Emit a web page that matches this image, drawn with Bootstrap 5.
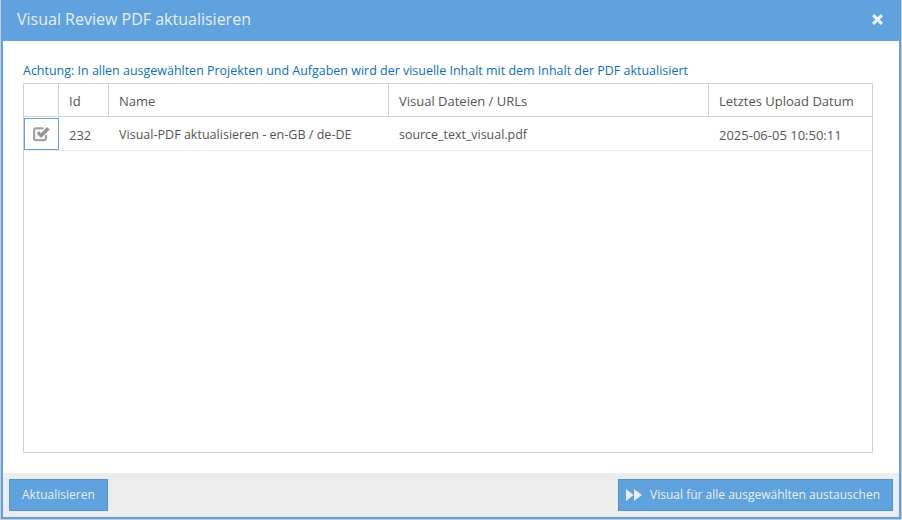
<!DOCTYPE html>
<html lang="de">
<head>
<meta charset="utf-8">
<title>Visual Review PDF aktualisieren</title>
<link href="https://cdn.jsdelivr.net/npm/bootstrap@5.3.0/dist/css/bootstrap.min.css" rel="stylesheet">
<style>
html, body { height: 520px; overflow: hidden; background: #c9cdd0; }
body { font-family: "Open Sans", sans-serif; font-size: 13px; color: #555; }
.dlg { width: 900px; height: 519px; margin-left: 1px; border: 2px solid #5fa2dd; border-top: 0; background: #fff; }
.dlg-head { height: 41px; flex: none; background: #5fa2dd; color: #e9eff5; padding: 0 17px 3px 16px; margin: 0 -2px; }
.dlg-title { font-size: 16px; font-weight: 400; margin: 0; line-height: 1; }
.dlg-body { flex: 1 1 auto; padding: 19px 26px 0 20px; }
.warn { color: #0b6fb8; font-size: 12.48px; line-height: 21px; height: 23px; white-space: nowrap; }
.grid-box { border: 1px solid #cfcfcf; height: 370px; }
.hdr, .datarow { display: flex; }
.hdr { height: 33px; border-bottom: 1px solid #cfcfcf; }
.datarow { height: 34px; border-bottom: 1px solid #ececec; }
.c { display: flex; align-items: center; padding-left: 10px; flex: none; white-space: nowrap; }
.hdr .c { border-right: 1px solid #cfcfcf; padding-top: 3px; }
.datarow .c { padding-top: 4px; }
.hdr .c:last-child { border-right: 0; }
.c1 { width: 35px; padding-left: 0 !important; }
.c2 { width: 50px; }
.c3 { width: 280px; }
.c4 { width: 320px; }
.c5 { flex: 1 1 auto !important; }
.tight { font-size: 12.45px; }
.tight-name { font-size: 12.55px; }
.datarow .chk { justify-content: center; border: 1px solid #5fa2dd; margin: 1px 0 0 0; padding-top: 0; height: 32px; width: 35px; }
.dlg-foot { height: 44px; flex: none; background: #ececec; padding: 6px 6px 0 6px; }
.act { background: #5fa2dd; border: 1px solid #4f95d2; border-radius: 0; color: #e9eff5; font-size: 12px; height: 32px; padding: 0 12px; display: inline-flex; align-items: center; gap: 8px; }
.act:hover { background: #5fa2dd; color: #e9eff5; border-color: #4f95d2; }
.act-wide { padding: 0 12px 0 7px; }
</style>
</head>
<body>
<div class="dlg d-flex flex-column">
  <div class="dlg-head d-flex align-items-center justify-content-between">
    <h1 class="dlg-title">Visual Review PDF aktualisieren</h1>
    <svg width="13" height="13" viewBox="0 0 13 13" aria-label="Schließen"><path d="M1 3.2 3.2 1 6.5 4.3 9.8 1 12 3.2 8.7 6.5 12 9.8 9.8 12 6.5 8.7 3.2 12 1 9.8 4.3 6.5Z" fill="#eef3f8"/></svg>
  </div>
  <div class="dlg-body">
    <div class="warn">Achtung: In allen ausgewählten Projekten und Aufgaben wird der visuelle Inhalt mit dem Inhalt der PDF aktualisiert</div>
    <div class="grid-box">
      <div class="hdr">
        <div class="c c1"></div><div class="c c2">Id</div><div class="c c3">Name</div><div class="c c4">Visual Dateien / URLs</div><div class="c c5">Letztes Upload Datum</div>
      </div>
      <div class="datarow">
        <div class="c c1 chk">
          <svg width="18" height="16" viewBox="0 0 18 16"><path d="M13 9V12.3A1.9 1.9 0 0 1 11.1 14.2H3A1.9 1.9 0 0 1 1.1 12.3V4.2A1.9 1.9 0 0 1 3 2.3H10.5" fill="none" stroke="#a3a3a3" stroke-width="2.2"/><path d="M3.6 7.4 6 5 8 7.2 14 1 16.8 3.4 8 12Z" fill="#969696"/></svg>
        </div>
        <div class="c c2">232</div><div class="c c3 tight-name">Visual-PDF aktualisieren - en-GB / de-DE</div><div class="c c4 tight">source_text_visual.pdf</div><div class="c c5">2025-06-05 10:50:11</div>
      </div>
    </div>
  </div>
  <div class="dlg-foot d-flex justify-content-between">
    <button type="button" class="btn act">Aktualisieren</button>
    <button type="button" class="btn act act-wide">
      <svg width="16" height="12" viewBox="0 0 16 12"><path d="M0 0 7.5 6 0 12ZM8 0 16 6 8 12Z" fill="#e9eff5"/></svg>
      Visual für alle ausgewählten austauschen
    </button>
  </div>
</div>
<script src="https://cdn.jsdelivr.net/npm/bootstrap@5.3.0/dist/js/bootstrap.bundle.min.js"></script>
</body>
</html>
